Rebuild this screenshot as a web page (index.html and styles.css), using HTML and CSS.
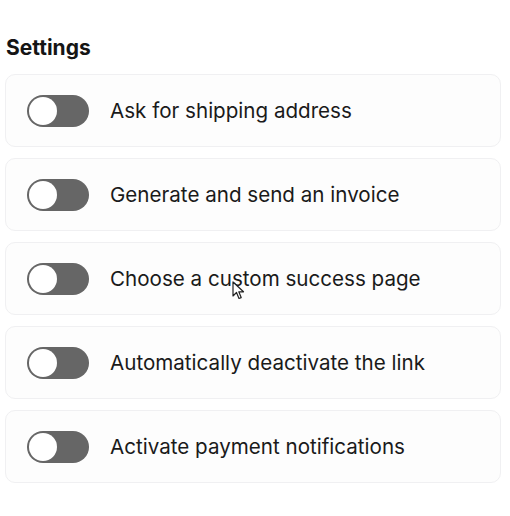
FILE: index.html
```html
<!DOCTYPE html>
<html>
<head>
<meta charset="utf-8">
<link rel="stylesheet" href="styles.css">
</head>
<body>
<div class="panel">
  <h2 class="title">Settings</h2>
  <div class="list">
    <div class="card"><span class="toggle"><span class="knob"></span></span><span class="label">Ask for shipping address</span></div>
    <div class="card"><span class="toggle"><span class="knob"></span></span><span class="label">Generate and send an invoice</span></div>
    <div class="card"><span class="toggle"><span class="knob"></span></span><span class="label">Choose a custom success page</span></div>
    <div class="card"><span class="toggle"><span class="knob"></span></span><span class="label">Automatically deactivate the link</span></div>
    <div class="card"><span class="toggle"><span class="knob"></span></span><span class="label">Activate payment notifications</span></div>
  </div>
</div>
<svg class="cursor" width="14" height="20" viewBox="0 0 14 20"><path d="M1 1 L1 15 L4.5 11.5 L7 17.5 L9.2 16.6 L6.8 10.8 L11.5 10.8 Z" fill="#fff" stroke="#222" stroke-width="1.2" stroke-linejoin="round"/></svg>
</body>
</html>
```
FILE: styles.css
```css
html, body { margin: 0; padding: 0; background: #fff; }
body { font-family: Inter, "Noto Sans", sans-serif; color: #141414; }
.panel { padding: 35px 9px 0 5px; }
.title { margin: 0 0 14px 1px; font-size: 21px; font-weight: 700; line-height: 25px; color: #151515; }
.list { display: flex; flex-direction: column; gap: 11px; }
.card {
  height: 71px;
  border: 1px solid #f0f0f2;
  border-radius: 10px;
  background: #fdfdfd;
  display: flex;
  align-items: center;
  padding-left: 21px;
  gap: 21px;
}
.toggle {
  width: 62px; height: 32px; border-radius: 16px; background: #666;
  display: flex; align-items: center; padding-left: 2px; box-sizing: border-box; flex: none;
}
.knob { width: 28px; height: 28px; border-radius: 50%; background: #fff; }
.label { font-size: 20.6px; line-height: 24px; color: #1a1a1a; }
.cursor { position: absolute; left: 232px; top: 281px; }
```
